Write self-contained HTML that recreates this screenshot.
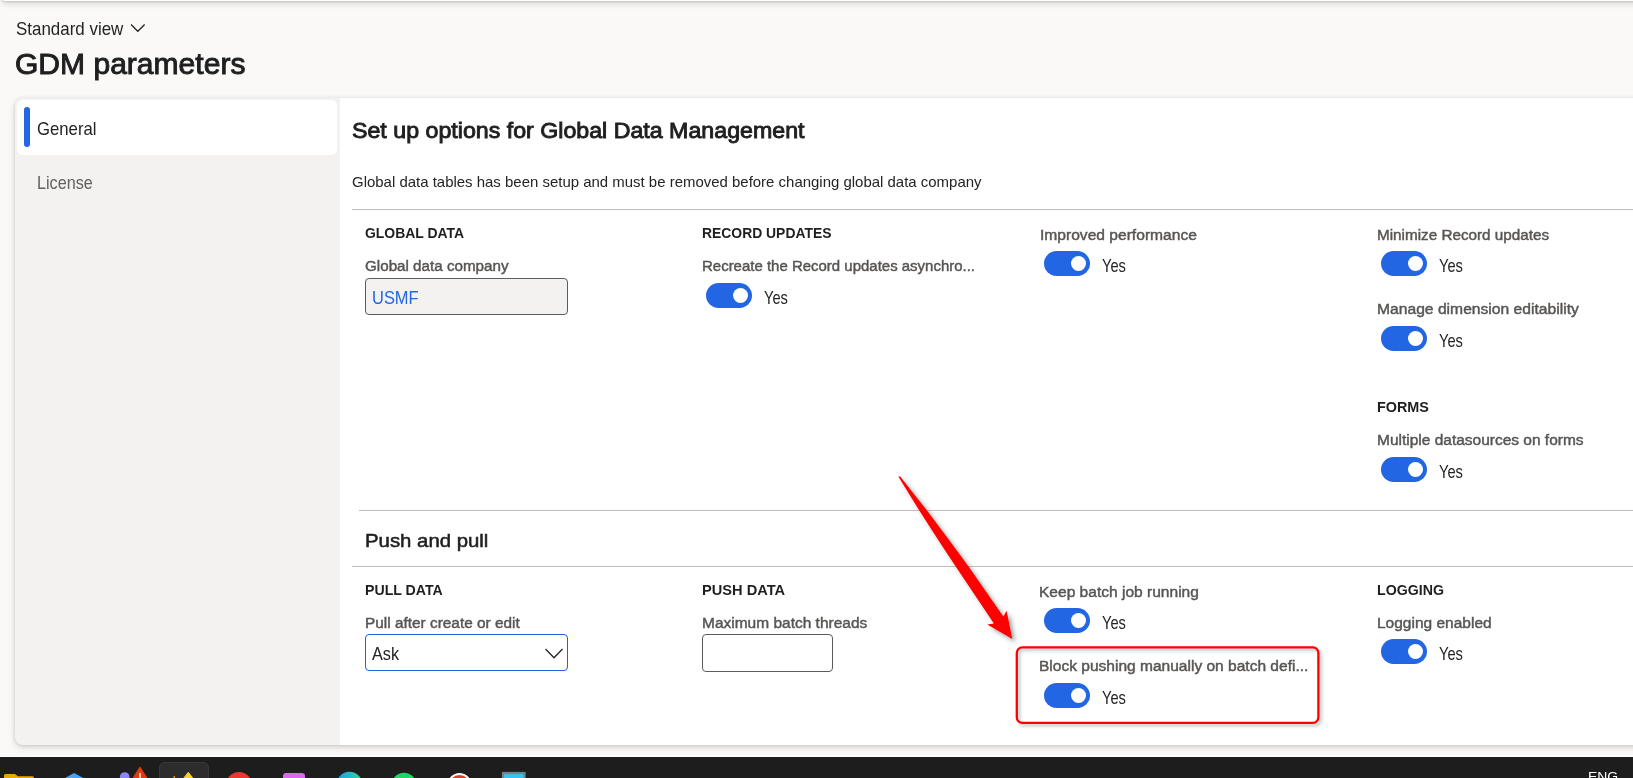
<!DOCTYPE html>
<html><head><meta charset="utf-8"><title>GDM parameters</title>
<style>
html,body{margin:0;padding:0;}
body{width:1633px;height:778px;overflow:hidden;background:#faf9f8;font-family:"Liberation Sans",sans-serif;color:#242424;position:relative;}
.t{position:absolute;white-space:nowrap;line-height:1;transform-origin:0 0;}
.topbar{position:absolute;left:2px;top:-7px;width:1640px;height:8px;background:#fff;border-radius:0 0 0 3px;box-shadow:0 1px 2px rgba(0,0,0,.14),0 3px 6px rgba(0,0,0,.13);}
.panel{position:absolute;left:15px;top:98px;width:1640px;height:647px;background:#f3f2f1;border-radius:8px;box-shadow:0 1px 4px rgba(0,0,0,.16),0 3px 8px rgba(0,0,0,.08);overflow:hidden;}
.content{position:absolute;left:325px;top:0;width:1320px;height:647px;background:#fff;}
.tab{position:absolute;left:2px;top:2px;width:320px;height:55px;background:#fff;border-radius:6px;}
.bar{position:absolute;left:24px;top:107px;width:6px;height:40px;border-radius:3px;background:#2266e3;}
.hl{position:absolute;height:1px;background:#c1beba;}
.tog{position:absolute;width:46px;height:25px;border-radius:12.5px;background:#2266e3;}
.tog i{position:absolute;right:3.7px;top:4.7px;width:15.6px;height:15.6px;border-radius:50%;background:#fff;}
.inp{position:absolute;box-sizing:border-box;border:1px solid #5c5c5c;border-radius:4px;background:#fff;}
.taskbar{position:absolute;left:0;top:757px;width:1633px;height:21px;background:#1d1d1d;overflow:hidden;}
.wl{position:absolute;left:0;top:756px;width:1633px;height:1px;background:#fff;}
svg{position:absolute;overflow:visible;}
</style></head><body>
<div class="topbar"></div>
<svg style="left:0;top:0" width="1633" height="100"><path d="M131 24.5 L137.8 31.3 L144.6 24.5" fill="none" stroke="#242424" stroke-width="1.3"/></svg>
<div class="panel"><div class="tab"></div><div class="content"></div></div>
<div class="bar"></div>
<div class="hl" style="left:352px;top:209px;width:1290px;"></div>
<div class="hl" style="left:359px;top:510px;width:1290px;"></div>
<div class="hl" style="left:352px;top:566px;width:1290px;"></div>
<div class="inp" style="left:365px;top:278px;width:203px;height:37px;background:#f3f2f1;"></div>
<div class="inp" style="left:365px;top:634px;width:203px;height:37px;border-color:#1f5fe0;"></div>
<div class="inp" style="left:702px;top:634px;width:131px;height:38px;"></div>
<svg style="left:0;top:0" width="1633" height="778"><path d="M545.5 649 L554 657.8 L562.5 649" fill="none" stroke="#242424" stroke-width="1.3"/></svg>
<div class="tog" style="left:706px;top:283px"><i></i></div><div class="tog" style="left:1044px;top:251px"><i></i></div><div class="tog" style="left:1381px;top:251px"><i></i></div><div class="tog" style="left:1381px;top:326px"><i></i></div><div class="tog" style="left:1381px;top:457px"><i></i></div><div class="tog" style="left:1044px;top:608px"><i></i></div><div class="tog" style="left:1044px;top:683px"><i></i></div><div class="tog" style="left:1381px;top:639px"><i></i></div>
<svg style="left:0;top:0" width="1633" height="778"><defs><filter id="sh" x="-20%" y="-20%" width="150%" height="150%"><feDropShadow dx="3" dy="3" stdDeviation="2.3" flood-color="#203030" flood-opacity=".45"/></filter><filter id="sh2" x="-5%" y="-10%" width="112%" height="125%"><feDropShadow dx="2.2" dy="2.2" stdDeviation="1.6" flood-color="#203030" flood-opacity=".32"/></filter></defs>
<rect x="1016.8" y="647.4" width="301.6" height="75.4" rx="5.5" ry="5.5" fill="none" stroke="#ff0000" stroke-width="2.3" filter="url(#sh2)"/>
<path d="M898.3 476.6 L900.2 476.6 L926.6 510 Q950 541 968.2 566 L1003.4 616.4 L1006.6 610.8 L1012.3 639 L987.3 624.5 L993.9 623.4 L955.4 566 Q940 543 919 510 Z" fill="#ff0000" filter="url(#sh)"/></svg>
<div class="wl"></div>
<div class="taskbar"><svg style="left:0;top:-757px" width="1633" height="778">
<path d="M4 778 V775.5 Q4 774 5.5 774 H15 L18 776.3 H32.5 Q34 776.3 34 778 Z" fill="#e9a800"/>
<path d="M65 778 L74 773 L83.5 778 Z" fill="#4aa3f2"/>
<circle cx="124.7" cy="777" r="4.8" fill="#8f85f5"/>
<path d="M140 767.3 L133.2 778 H146.8 Z" fill="#e03a10" stroke="#e03a10" stroke-width="1.2" stroke-linejoin="round"/>
<rect x="139.4" y="773" width="1.3" height="6" fill="#fff"/>
<rect x="159.5" y="762.5" width="49" height="30" rx="5" fill="#2c2c2c" stroke="#383838" stroke-width="1"/>
<path d="M188.3 772.6 L184 778 H192.6 Z" fill="#f5d033" stroke="#f5d033" stroke-width="1.2" stroke-linejoin="round"/>
<rect x="173.5" y="776" width="1.5" height="2" fill="#e08a10"/>
<circle cx="239" cy="785" r="13" fill="#e8382f"/>
<rect x="283" y="773" width="22" height="20" rx="3" fill="#e065f2"/>
<linearGradient id="eg" x1="0" x2="1"><stop offset="0" stop-color="#1b9de2"/><stop offset=".55" stop-color="#25bcc8"/><stop offset="1" stop-color="#4fd17a"/></linearGradient><circle cx="349.5" cy="785" r="13.2" fill="url(#eg)"/>
<circle cx="404" cy="785" r="12.3" fill="#1ed760"/>
<circle cx="459.5" cy="785" r="12" fill="#fff"/><circle cx="459.5" cy="785.5" r="10.5" fill="#d8432b"/>
<rect x="503" y="773" width="21.5" height="16" fill="#35c3f3" stroke="#76838f" stroke-width="2.2"/>
</svg></div>

<div class="t" id="sv" style="left:15.80px;top:20.00px;font-size:18.5px;color:#242424;transform:scaleX(0.9154);">Standard view</div>
<div class="t" id="ttl" style="left:15.22px;top:50.00px;font-size:28.6px;color:#1f1f1f;transform:scaleX(1.0508);-webkit-text-stroke:0.9px #1f1f1f;">GDM parameters</div>
<div class="t" id="gen" style="left:37.30px;top:120.00px;font-size:18.2px;color:#242424;transform:scaleX(0.9189);">General</div>
<div class="t" id="lic" style="left:37.11px;top:174.00px;font-size:18.2px;color:#616161;transform:scaleX(0.8900);">License</div>
<div class="t" id="h1" style="left:351.83px;top:120.00px;font-size:22.2px;color:#1f1f1f;transform:scaleX(1.0452);-webkit-text-stroke:0.9px #1f1f1f;">Set up options for Global Data Management</div>
<div class="t" id="sub" style="left:352.00px;top:174.00px;font-size:15px;color:#242424;transform:scaleX(0.9972);">Global data tables has been setup and must be removed before changing global data company</div>
<div class="t" id="g1" style="left:365.00px;top:225.00px;font-size:15.5px;color:#1f1f1f;transform:scaleX(0.8998);font-weight:bold;">GLOBAL DATA</div>
<div class="t" id="l1" style="left:365.22px;top:258.00px;font-size:15.4px;color:#575553;transform:scaleX(0.9867);-webkit-text-stroke:0.45px #575553;">Global data company</div>
<div class="t" id="usmf" style="left:371.56px;top:290.00px;font-size:17.5px;color:#2266e3;transform:scaleX(0.9397);">USMF</div>
<div class="t" id="g2" style="left:701.60px;top:225.00px;font-size:15.5px;color:#1f1f1f;transform:scaleX(0.8965);font-weight:bold;">RECORD UPDATES</div>
<div class="t" id="l2" style="left:701.75px;top:258.00px;font-size:15.4px;color:#575553;transform:scaleX(0.9730);-webkit-text-stroke:0.45px #575553;">Recreate the Record updates asynchro...</div>
<div class="t" id="l3" style="left:1039.71px;top:227.00px;font-size:15.4px;color:#575553;transform:scaleX(1.0132);-webkit-text-stroke:0.45px #575553;">Improved performance</div>
<div class="t" id="l4" style="left:1376.93px;top:227.00px;font-size:15.4px;color:#575553;transform:scaleX(0.9908);-webkit-text-stroke:0.45px #575553;">Minimize Record updates</div>
<div class="t" id="l5" style="left:1376.91px;top:301.00px;font-size:15.4px;color:#575553;transform:scaleX(1.0170);-webkit-text-stroke:0.45px #575553;">Manage dimension editability</div>
<div class="t" id="g3" style="left:1376.77px;top:399.00px;font-size:15.5px;color:#1f1f1f;transform:scaleX(0.9281);font-weight:bold;">FORMS</div>
<div class="t" id="l6" style="left:1376.92px;top:432.00px;font-size:15.4px;color:#575553;transform:scaleX(1.0061);-webkit-text-stroke:0.45px #575553;">Multiple datasources on forms</div>
<div class="t" id="pp" style="left:364.62px;top:531.00px;font-size:19px;color:#1f1f1f;transform:scaleX(1.0716);-webkit-text-stroke:0.55px #1f1f1f;">Push and pull</div>
<div class="t" id="g4" style="left:364.69px;top:582.00px;font-size:15.5px;color:#1f1f1f;transform:scaleX(0.9119);font-weight:bold;">PULL DATA</div>
<div class="t" id="l7" style="left:364.83px;top:615.00px;font-size:15.4px;color:#575553;transform:scaleX(0.9993);-webkit-text-stroke:0.45px #575553;">Pull after create or edit</div>
<div class="t" id="ask" style="left:371.90px;top:646.00px;font-size:17.5px;color:#242424;transform:scaleX(0.9296);">Ask</div>
<div class="t" id="g5" style="left:701.56px;top:582.00px;font-size:15.5px;color:#1f1f1f;transform:scaleX(0.9433);font-weight:bold;">PUSH DATA</div>
<div class="t" id="l8" style="left:701.72px;top:615.00px;font-size:15.4px;color:#575553;transform:scaleX(1.0062);-webkit-text-stroke:0.45px #575553;">Maximum batch threads</div>
<div class="t" id="l9" style="left:1039.22px;top:584.00px;font-size:15.4px;color:#575553;transform:scaleX(1.0099);-webkit-text-stroke:0.45px #575553;">Keep batch job running</div>
<div class="t" id="l10" style="left:1039.22px;top:658.00px;font-size:15.4px;color:#575553;transform:scaleX(1.0090);-webkit-text-stroke:0.45px #575553;">Block pushing manually on batch defi...</div>
<div class="t" id="g6" style="left:1376.79px;top:582.00px;font-size:15.5px;color:#1f1f1f;transform:scaleX(0.9149);font-weight:bold;">LOGGING</div>
<div class="t" id="l11" style="left:1376.92px;top:615.00px;font-size:15.4px;color:#575553;transform:scaleX(1.0069);-webkit-text-stroke:0.45px #575553;">Logging enabled</div>
<div class="t" id="eng" style="left:1587.88px;top:771.00px;font-size:12.5px;color:#ffffff;transform:scaleX(1.1157);">ENG</div>
<div class="t" id="y0" style="left:764.40px;top:290.00px;font-size:17.8px;color:#242424;transform:scaleX(0.8243);">Yes</div>
<div class="t" id="y1" style="left:1102.40px;top:258.00px;font-size:17.8px;color:#242424;transform:scaleX(0.8243);">Yes</div>
<div class="t" id="y2" style="left:1439.40px;top:258.00px;font-size:17.8px;color:#242424;transform:scaleX(0.8243);">Yes</div>
<div class="t" id="y3" style="left:1439.40px;top:333.00px;font-size:17.8px;color:#242424;transform:scaleX(0.8243);">Yes</div>
<div class="t" id="y4" style="left:1439.40px;top:464.00px;font-size:17.8px;color:#242424;transform:scaleX(0.8243);">Yes</div>
<div class="t" id="y5" style="left:1102.40px;top:615.00px;font-size:17.8px;color:#242424;transform:scaleX(0.8243);">Yes</div>
<div class="t" id="y6" style="left:1102.40px;top:690.00px;font-size:17.8px;color:#242424;transform:scaleX(0.8243);">Yes</div>
<div class="t" id="y7" style="left:1439.40px;top:646.00px;font-size:17.8px;color:#242424;transform:scaleX(0.8243);">Yes</div>
</body></html>
